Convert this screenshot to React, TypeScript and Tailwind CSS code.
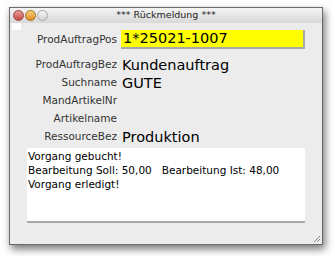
const rows: [string, string][] = [
  ["ProdAuftragBez", "Kundenauftrag"],
  ["Suchname", "GUTE"],
  ["MandArtikelNr", ""],
  ["Artikelname", ""],
  ["RessourceBez", "Produktion"],
];

const Light = ({ color, ring }: { color: string; ring: string }) => (
  <div className={`h-[11px] w-[11px] rounded-full border ${ring} ${color}`} />
);

export default function App() {
  return (
    <div className="h-[256px] w-[335px] bg-white pl-[9px] pt-[7px] font-['DejaVu_Sans',sans-serif]">
      <div className="flex h-[238px] w-[314px] flex-col border border-[#6a6a6a] bg-[#ececec] shadow-[2px_4px_8px_rgba(0,0,0,0.55)]">
        {/* title bar */}
        <div className="relative flex h-[15px] items-center bg-gradient-to-b from-[#f4f4f4] to-[#d8d8d8]">
          <div className="flex gap-[1px] pl-[3px]">
            <Light color="bg-gradient-to-b from-[#e89a98] to-[#c44a46]" ring="border-[#9a4a48]" />
            <Light color="bg-gradient-to-b from-[#f6d27a] to-[#e38a1c]" ring="border-[#a8701c]" />
            <Light color="bg-gradient-to-b from-[#f4f4f4] to-[#d4d4d4]" ring="border-[#a8a8a8]" />
          </div>
          <div className="absolute inset-x-0 text-center text-[9.5px] text-[#222]">*** Rückmeldung ***</div>
        </div>
        <div className="relative flex flex-1 flex-col">
          <div className="ml-[2px] h-[7px] w-[9px] bg-white" />
          {/* first row */}
          <div className="flex h-[19px] items-center">
            <div className="w-[107px] text-right text-[10.5px] text-[#333]">ProdAuftragPos</div>
            <div className="ml-[4px] flex h-[19px] w-[184px] items-center border-b-2 border-r-2 border-[#a8a8a8] bg-[#ffff00] pl-[2px] text-[14.5px] text-black">
              1*25021-1007
            </div>
          </div>
          <div className="mt-[7px] flex flex-col">
            {rows.map(([label, value]) => (
              <div key={label} className="flex h-[18px] items-center">
                <div className="w-[107px] text-right text-[10.5px] text-[#333]">{label}</div>
                <div className="ml-[5px] text-[14.5px] leading-none text-black">{value}</div>
              </div>
            ))}
          </div>
          {/* message box */}
          <div className="ml-[17px] mt-[2px] h-[75px] w-[278px] border-b-2 border-[#a8a8a8] bg-white pl-[1px] pt-[1px] text-[10.5px] leading-[14px] text-black">
            <div>Vorgang gebucht!</div>
            <div className="whitespace-pre">Bearbeitung Soll: 50,00   Bearbeitung Ist: 48,00</div>
            <div>Vorgang erledigt!</div>
          </div>
          {/* resize grip */}
          <svg className="absolute bottom-[1px] right-[1px]" width="9" height="9" viewBox="0 0 9 9">
            <path d="M8 2L2 8M8 5L5 8" stroke="#8a8a8a" strokeWidth="1" />
          </svg>
        </div>
      </div>
    </div>
  );
}
